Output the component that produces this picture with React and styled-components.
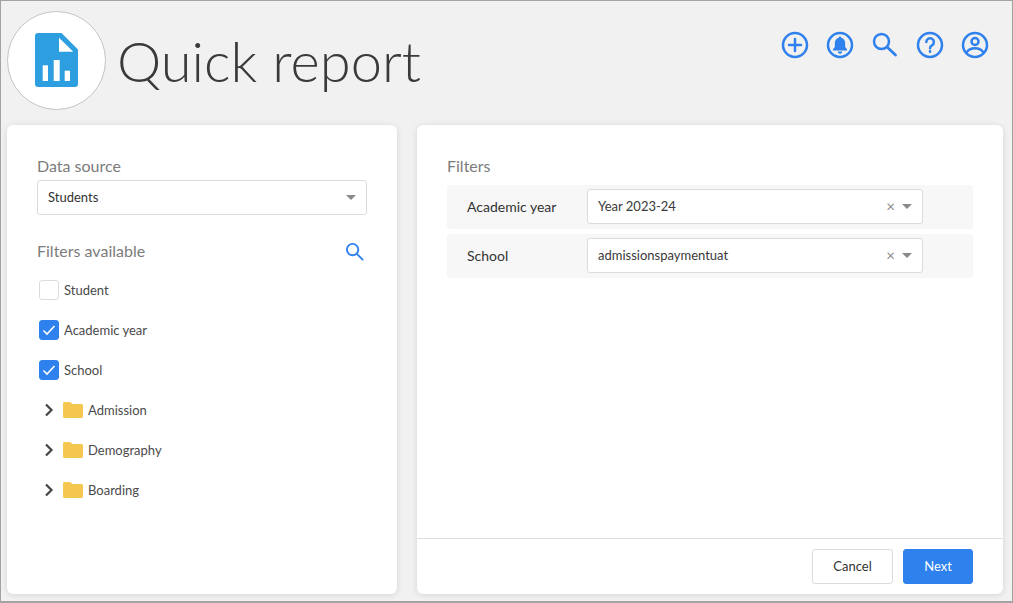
import React from 'react';
import styled, { createGlobalStyle } from 'styled-components';

const GlobalStyle = createGlobalStyle`
  html, body {
    margin: 0;
    padding: 0;
    background: #f1f1f1;
  }
  * {
    box-sizing: border-box;
  }
`;

const Page = styled.div`
  width: 1013px;
  height: 603px;
  overflow: hidden;
  border: 1px solid #a3a3a3;
  border-bottom-width: 2px;
  background: #f1f1f1;
  font-family: Lato, "Liberation Sans", sans-serif;
  color: #3c3c3c;
  display: flex;
  flex-direction: column;
`;

const Header = styled.header`
  height: 124px;
  flex: none;
  padding: 10px 23px 0 6px;
  display: flex;
  justify-content: space-between;
  align-items: flex-start;
`;

const TitleGroup = styled.div`
  display: flex;
  align-items: center;
  gap: 11px;
`;

const LogoCircle = styled.div`
  width: 99px;
  height: 99px;
  padding: 0 1px 1px 0;
  border-radius: 50%;
  background: #fff;
  border: 1px solid #c4c4c4;
  display: flex;
  align-items: center;
  justify-content: center;
`;

const Title = styled.h1`
  margin: 0;
  font-size: 56px;
  font-weight: 300;
  line-height: 1;
  color: #3a3a3a;
`;

const HeaderIcons = styled.div`
  display: flex;
  gap: 17px;
  margin-top: 20px;
`;

const IconSlot = styled.svg`
  width: 28px;
  height: 28px;
  display: block;
  fill: none;
  stroke: #2f81ed;
  stroke-width: 2.5;
  stroke-linecap: round;
`;

const Panels = styled.div`
  flex: 1;
  padding: 0 9px 7px 6px;
  display: flex;
  gap: 20px;
  min-height: 0;
`;

const Card = styled.section`
  background: #fff;
  border-radius: 6px;
  box-shadow: 0 1px 6px rgba(0, 0, 0, 0.12);
  display: flex;
  flex-direction: column;
  width: ${(p) => p.$width}px;
`;

const LeftBody = styled.div`
  padding: 31px 30px 0;
`;

const SectionLabel = styled.div`
  font-size: 16px;
  line-height: 20px;
  color: #7c7c7c;
`;

const DataSourceSelect = styled.div`
  margin-top: 4px;
  height: 35px;
  border: 1px solid #dcdcdc;
  border-radius: 3px;
  background: #fff;
  display: flex;
  align-items: center;
  padding: 0 10px;
  font-size: 13px;
  color: #333;
`;

const SelectValue = styled.span`
  flex: 1;
  padding-bottom: 2px;
`;

const Caret = styled.span`
  width: 0;
  height: 0;
  border-left: 5px solid transparent;
  border-right: 5px solid transparent;
  border-top: 5px solid #8a8a8a;
  flex: none;
`;

const FiltersHead = styled.div`
  margin-top: 26px;
  display: flex;
  justify-content: space-between;
  align-items: center;
  padding-right: 3px;
`;

const SmallSearch = styled.svg`
  width: 19px;
  height: 19px;
  display: block;
  fill: none;
  stroke: #2f81ed;
  stroke-width: 2;
  stroke-linecap: round;
`;

const FilterList = styled.div`
  margin-top: 9px;
  display: flex;
  flex-direction: column;
`;

const FilterRow = styled.div`
  height: 40px;
  display: flex;
  align-items: center;
  padding-left: 2px;
  gap: 5px;
  font-size: 13px;
  color: #4a4a4a;
`;

const Checkbox = styled.span`
  width: 20px;
  height: 20px;
  border-radius: 3px;
  flex: none;
  display: flex;
  align-items: center;
  justify-content: center;
  background: ${(p) => (p.$checked ? '#2f81ed' : '#fff')};
  border: 1px solid ${(p) => (p.$checked ? '#2f81ed' : '#dcdcdc')};
`;

const Chevron = styled.svg`
  width: 10px;
  height: 14px;
  margin-left: 5px;
  margin-right: 4px;
  flex: none;
  fill: none;
  stroke: #444;
  stroke-width: 2.2;
`;

const Folder = styled.svg`
  width: 20px;
  height: 16px;
  flex: none;
  fill: #f4c84e;
`;

const RightBody = styled.div`
  flex: 1;
  padding: 31px 30px 0;
`;

const RuleRows = styled.div`
  margin-top: 9px;
  display: flex;
  flex-direction: column;
  gap: 5px;
`;

const RuleRow = styled.div`
  height: 44px;
  background: #f7f7f7;
  border-radius: 3px;
  display: flex;
  align-items: flex-start;
  padding: 4px 0 0 20px;
`;

const RuleName = styled.span`
  width: 120px;
  flex: none;
  font-size: 14px;
  line-height: 36px;
  color: #333;
`;

const RuleSelect = styled.div`
  width: 336px;
  height: 35px;
  border: 1px solid #dcdcdc;
  border-radius: 3px;
  background: #fff;
  display: flex;
  align-items: center;
  padding: 0 10px;
  font-size: 13px;
  color: #3a3a3a;
`;

const ClearMark = styled.span`
  font-size: 15px;
  line-height: 1;
  color: #8a8a8a;
  margin-right: 7px;
`;

const Footer = styled.footer`
  height: 56px;
  flex: none;
  border-top: 1px solid #dedede;
  padding: 10px 30px 0;
  display: flex;
  justify-content: flex-end;
  gap: 10px;
`;

const Button = styled.button`
  height: 35px;
  width: ${(p) => (p.$primary ? 70 : 81)}px;
  padding: 0 0 2px;
  border-radius: 3px;
  font-family: inherit;
  font-size: 13px;
  cursor: pointer;
  background: ${(p) => (p.$primary ? '#2f81ed' : '#fff')};
  color: ${(p) => (p.$primary ? '#fff' : '#333')};
  border: 1px solid ${(p) => (p.$primary ? '#2f81ed' : '#dcdcdc')};
`;

const availableFilters = [
  { name: 'Student', checked: false },
  { name: 'Academic year', checked: true },
  { name: 'School', checked: true },
];

const folders = ['Admission', 'Demography', 'Boarding'];

const selectedFilters = [
  { name: 'Academic year', value: 'Year 2023-24' },
  { name: 'School', value: 'admissionspaymentuat' },
];

const ReportLogo = () => (
  <svg width="43" height="54" viewBox="0 0 43 54">
    <path d="M3 0h23.500L43 16.500V51a3 3 0 0 1-3 3H3a3 3 0 0 1-3-3V3a3 3 0 0 1 3-3z" fill="#2d9fe0" />
    <path d="M24 4.700l14.300 14H24z" fill="#fff" />
    <rect x="7.700" y="32.300" width="5.300" height="15.700" fill="#fff" />
    <rect x="18.700" y="27" width="6" height="21" fill="#fff" />
    <rect x="29.700" y="37.700" width="5.300" height="10.300" fill="#fff" />
  </svg>
);

const App = () => (
  <Page>
    <GlobalStyle />
    <Header>
      <TitleGroup>
        <LogoCircle>
          <ReportLogo />
        </LogoCircle>
        <Title>Quick report</Title>
      </TitleGroup>
      <HeaderIcons>
        <IconSlot viewBox="0 0 28 28">
          <circle cx="14" cy="14" r="12" />
          <path d="M14 8v12M8 14h12" />
        </IconSlot>
        <IconSlot viewBox="0 0 28 28">
          <circle cx="14" cy="14" r="12" />
          <path
            d="M14 5.500c-.8 0-1.300.6-1.300 1.300C10.300 7.500 8.800 9.500 8.800 12v4L7 18.300v1.200h14v-1.200L19.200 16v-4c0-2.500-1.500-4.500-3.900-5.200 0-.7-.5-1.300-1.300-1.300zM11.800 20.500h4.400a2.200 2.200 0 0 1-4.400 0z"
            fill="#2f81ed"
            stroke="none"
          />
        </IconSlot>
        <IconSlot viewBox="0 0 28 28">
          <circle cx="10.500" cy="10.500" r="7.500" />
          <path d="M16 16l8.500 8" strokeWidth="2.800" />
        </IconSlot>
        <IconSlot viewBox="0 0 28 28">
          <circle cx="14" cy="14" r="12" />
          <path d="M10.300 11a3.800 3.800 0 1 1 5.700 3.300c-1.300.8-2 1.500-2 3" />
          <path d="M14 20.300v.4" />
        </IconSlot>
        <IconSlot viewBox="0 0 28 28">
          <circle cx="14" cy="14" r="12" />
          <circle cx="14" cy="10.500" r="3.500" />
          <path d="M5.500 21.500c2-3.300 5.500-4.300 8.500-4.300s6.500 1 8.500 4.300" />
        </IconSlot>
      </HeaderIcons>
    </Header>
    <Panels>
      <Card $width={390}>
        <LeftBody>
          <SectionLabel>Data source</SectionLabel>
          <DataSourceSelect>
            <SelectValue>Students</SelectValue>
            <Caret />
          </DataSourceSelect>
          <FiltersHead>
            <SectionLabel>Filters available</SectionLabel>
            <SmallSearch viewBox="0 0 20 20">
              <circle cx="8" cy="8" r="6" />
              <path d="M12.500 12.500l6 6" />
            </SmallSearch>
          </FiltersHead>
          <FilterList>
            {availableFilters.map((filter) => (
              <FilterRow key={filter.name}>
                <Checkbox $checked={filter.checked}>
                  {filter.checked && (
                    <svg width="14" height="12" viewBox="0 0 14 12" fill="none" stroke="#fff" strokeWidth="1.600">
                      <path d="M1.500 6.500l3.500 3.500 7.500-8" />
                    </svg>
                  )}
                </Checkbox>
                {filter.name}
              </FilterRow>
            ))}
            {folders.map((folder) => (
              <FilterRow key={folder}>
                <Chevron viewBox="0 0 10 14">
                  <path d="M2 1.500l5.500 5.500L2 12.500" />
                </Chevron>
                <Folder viewBox="0 0 20 16">
                  <path d="M1.500 0h5.500l2.500 2h9a1.500 1.500 0 0 1 1.500 1.500V14.500a1.500 1.500 0 0 1-1.500 1.500h-17A1.500 1.500 0 0 1 0 14.500v-13A1.500 1.500 0 0 1 1.500 0z" />
                </Folder>
                <span>{folder}</span>
              </FilterRow>
            ))}
          </FilterList>
        </LeftBody>
      </Card>
      <Card $width={586}>
        <RightBody>
          <SectionLabel>Filters</SectionLabel>
          <RuleRows>
            {selectedFilters.map((rule) => (
              <RuleRow key={rule.name}>
                <RuleName>{rule.name}</RuleName>
                <RuleSelect>
                  <SelectValue>{rule.value}</SelectValue>
                  <ClearMark>×</ClearMark>
                  <Caret />
                </RuleSelect>
              </RuleRow>
            ))}
          </RuleRows>
        </RightBody>
        <Footer>
          <Button>Cancel</Button>
          <Button $primary>Next</Button>
        </Footer>
      </Card>
    </Panels>
  </Page>
);

export default App;
